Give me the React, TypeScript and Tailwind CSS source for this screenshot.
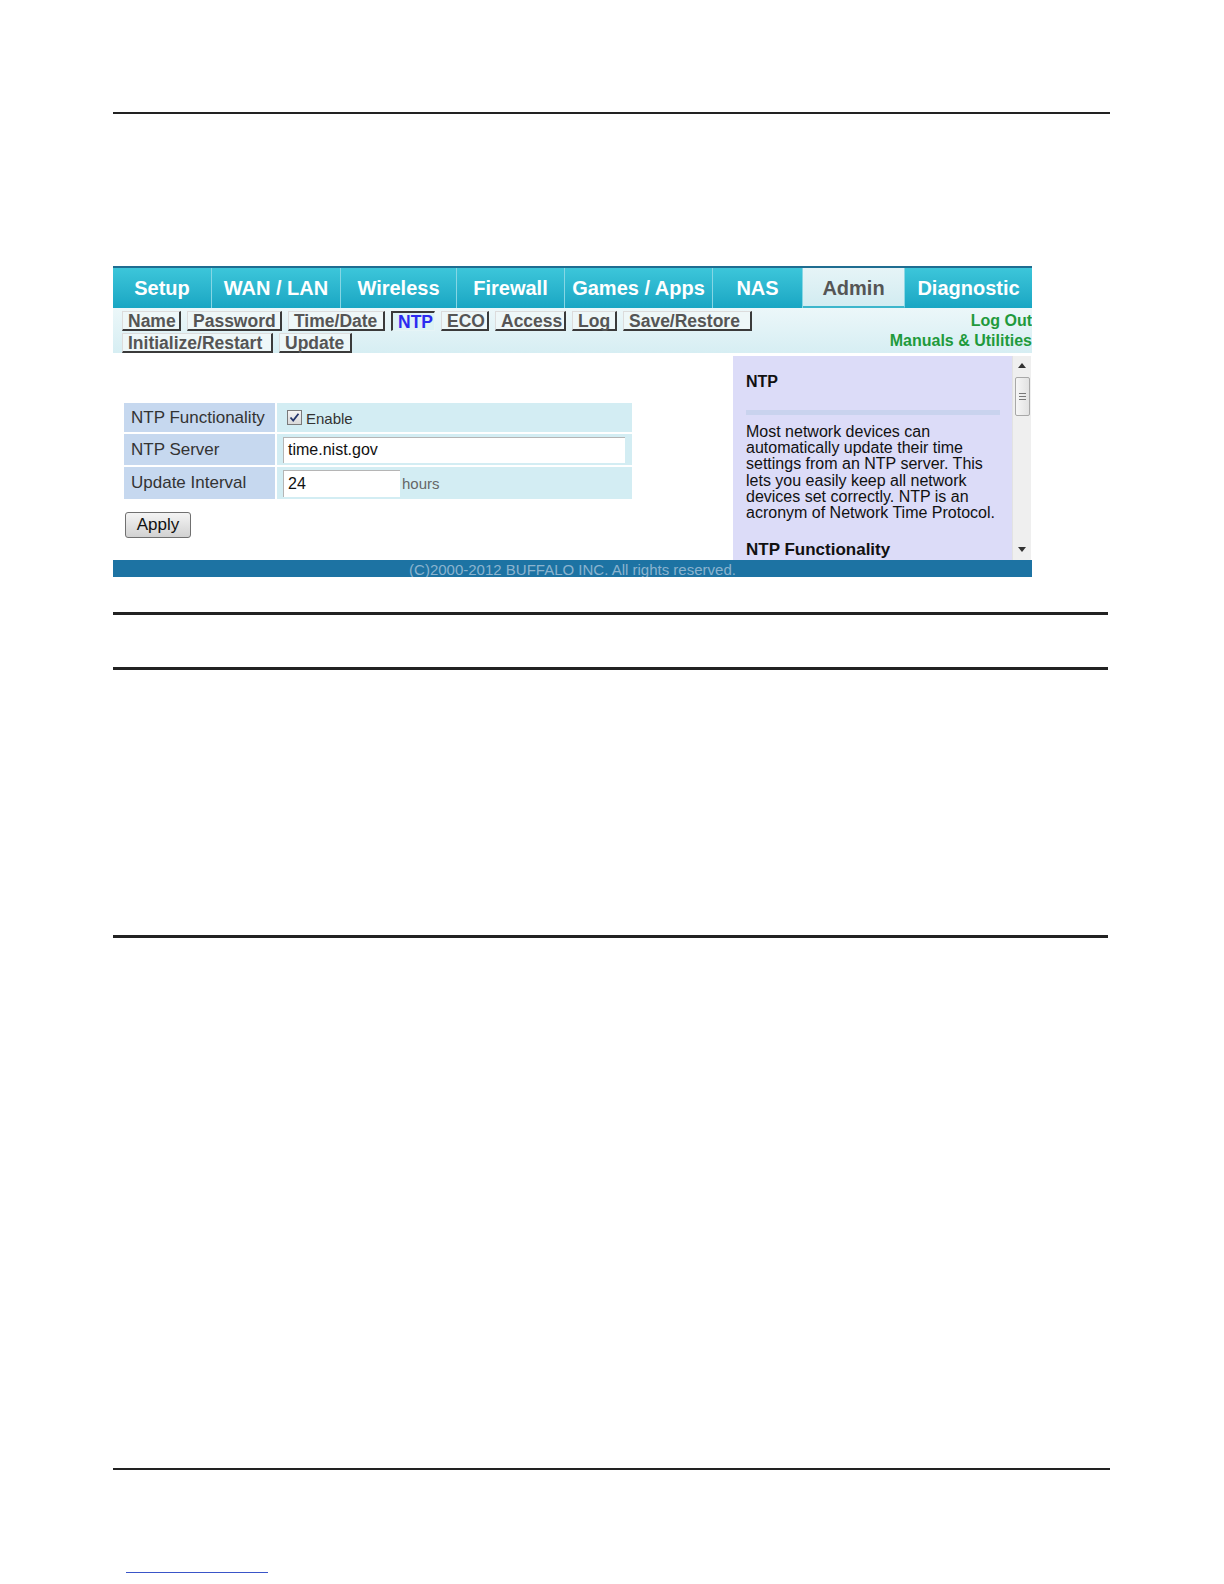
import React from 'react';

const tabs = [
  { label: 'Setup', w: 'w-[99px]' },
  { label: 'WAN / LAN', w: 'w-[129px]' },
  { label: 'Wireless', w: 'w-[116px]' },
  { label: 'Firewall', w: 'w-[108px]' },
  { label: 'Games / Apps', w: 'w-[148px]' },
  { label: 'NAS', w: 'w-[90px]' },
  { label: 'Admin', w: 'w-[102px]', active: true },
  { label: 'Diagnostic', w: 'w-[127px]' },
];

const subRow1 = [
  { label: 'Name', w: 'w-[59px]' },
  { label: 'Password', w: 'w-[95px]' },
  { label: 'Time/Date', w: 'w-[97px]' },
  { label: 'NTP', w: 'w-[44px]' },
  { label: 'ECO', w: 'w-[48px]' },
  { label: 'Access', w: 'w-[71px]' },
  { label: 'Log', w: 'w-[45px]' },
  { label: 'Save/Restore', w: 'w-[129px]' },
];
const subRow2 = [
  { label: 'Initialize/Restart', w: 'w-[151px]' },
  { label: 'Update', w: 'w-[73px]' },
];

function SubTab({ label, w }: { label: string; w: string }) {
  const active = label === 'NTP';
  return (
    <div
      className={
        active
          ? `${w} h-[20px] pl-[5px] flex items-center whitespace-nowrap text-[17.5px] leading-[18px] font-bold text-[#2b2bf0] bg-[#dcf2f5] border-l-2 border-t-2 border-[#3a3a3a] border-r border-b border-r-[#e6f4f6] border-b-[#e6f4f6]`
          : `${w} h-[20px] pl-[5px] flex items-center whitespace-nowrap text-[17.5px] leading-[18px] font-bold text-[#555] bg-[#eef7f8] border-l border-t border-l-[#dcdcdc] border-t-[#dcdcdc] border-r-2 border-b-2 border-r-[#3a3a3a] border-b-[#3a3a3a]`
      }
    >
      {label}
    </div>
  );
}

function TabBar() {
  return (
    <div className="h-[42px] flex border-t-2 border-[#1f6d91]">
      {tabs.map((t) =>
        t.active ? (
          <div
            key={t.label}
            className={`${t.w} h-[40px] flex items-center justify-center bg-gradient-to-b from-[#e6f4f7] to-[#d2ecf1] border-b-2 border-[#3cb6cc] border-r border-r-[#8fd8e5] text-[20px] font-bold text-[#555]`}
          >
            <span className="pt-[2px]">{t.label}</span>
          </div>
        ) : (
          <div
            key={t.label}
            className={`${t.w} h-[40px] flex items-center justify-center bg-gradient-to-b from-[#3cc6da] to-[#18a6c3] border-r border-[#86d6e4] last:border-r-0 text-[20px] font-bold text-white`}
          >
            <span className="pb-[1px]">{t.label}</span>
          </div>
        )
      )}
    </div>
  );
}

function SubNav() {
  return (
    <div className="h-[45px] flex justify-between overflow-hidden bg-gradient-to-b from-[#ecf7f9] to-[#d6eef3]">
      <div className="pl-[9px] pt-[3px] flex flex-col gap-[2px]">
        <div className="flex gap-[6px]">
          {subRow1.map((s) => (
            <SubTab key={s.label} label={s.label} w={s.w} />
          ))}
        </div>
        <div className="flex gap-[6px]">
          {subRow2.map((s) => (
            <SubTab key={s.label} label={s.label} w={s.w} />
          ))}
        </div>
      </div>
      <div className="flex flex-col items-end pt-[3px] text-[16px] leading-[20px] font-bold text-[#1f9a3c]">
        <span>Log Out</span>
        <span>Manuals &amp; Utilities</span>
      </div>
    </div>
  );
}

function CheckBox() {
  return (
    <div className="w-[15px] h-[15px] border border-[#7a7a7a] bg-gradient-to-b from-[#f4f4f4] to-[#d9d9d9] flex items-center justify-center">
      <svg width="11" height="11" viewBox="0 0 11 11">
        <path d="M1.5 5.5 L4.2 8.6 L9.5 1.8" fill="none" stroke="#24356b" strokeWidth="1.8" />
      </svg>
    </div>
  );
}

function Form() {
  return (
    <div className="w-[620px] pl-[11px] pt-[50px]">
      <div className="grid grid-cols-[151px_355px] gap-x-[2px] gap-y-[2px] text-[17px] text-[#333]">
        <div className="h-[29px] bg-[#c6d8ef] pl-[7px] flex items-center">NTP Functionality</div>
        <div className="h-[29px] bg-[#d3edf3] pl-[10px] flex items-center gap-[4px]">
          <CheckBox />
          <span className="text-[15px] text-[#333] pt-[4px]">Enable</span>
        </div>
        <div className="h-[31px] bg-[#c6d8ef] pl-[7px] flex items-center">NTP Server</div>
        <div className="h-[31px] bg-[#d3edf3] pl-[6px] flex items-center">
          <div className="w-[342px] h-[26px] bg-white border-t border-l border-[#b5b5b5] pl-[4px] flex items-center text-[16px] text-[#111]">
            time.nist.gov
          </div>
        </div>
        <div className="h-[32px] bg-[#c6d8ef] pl-[7px] flex items-center">Update Interval</div>
        <div className="h-[32px] bg-[#d3edf3] pl-[6px] flex items-center">
          <div className="w-[117px] h-[27px] bg-white border-t border-l border-[#b5b5b5] pl-[4px] flex items-center text-[16px] text-[#111]">
            24
          </div>
          <span className="text-[15px] text-[#666] pl-[2px] pt-[3px]">hours</span>
        </div>
      </div>
      <button className="mt-[13px] ml-[1px] w-[66px] h-[26px] rounded-[3px] border border-[#707070] bg-gradient-to-b from-[#f4f4f4] to-[#d2d2d2] text-[17px] text-[#111] flex items-center justify-center">
        Apply
      </button>
    </div>
  );
}

function Help() {
  const lines = [
    'Most network devices can',
    'automatically update their time',
    'settings from an NTP server. This',
    'lets you easily keep all network',
    'devices set correctly. NTP is an',
    'acronym of Network Time Protocol.',
  ];
  return (
    <div className="w-[279px] mt-[3px] bg-[#dcdcf8] pl-[13px] pr-[12px] pt-[18px] overflow-hidden text-[#111]">
      <div className="text-[16px] leading-[16px] font-bold">NTP</div>
      <div className="mt-[20px] h-[5px] w-[254px] bg-[#c9d3ee]" />
      <div className="mt-[9px] text-[16px] leading-[16.2px]">
        {lines.map((l) => (
          <div key={l}>{l}</div>
        ))}
      </div>
      <div className="mt-[20px] text-[17px] leading-[17px] font-bold">NTP Functionality</div>
    </div>
  );
}

function ScrollBar() {
  return (
    <div className="w-[19px] mt-[3px] bg-[#efefef] border-l border-[#e2e2e2] flex flex-col items-center">
      <svg className="mt-[7px]" width="8" height="5" viewBox="0 0 8 5">
        <path d="M0 5 L4 0 L8 5 Z" fill="#333" />
      </svg>
      <div className="mt-[9px] w-[15px] h-[39px] rounded-[2px] border border-[#a8a8a8] bg-gradient-to-r from-[#f6f6f6] to-[#e2e2e2] flex flex-col items-center justify-center gap-[2px]">
        <div className="w-[7px] h-[1px] bg-[#777]" />
        <div className="w-[7px] h-[1px] bg-[#777]" />
        <div className="w-[7px] h-[1px] bg-[#777]" />
      </div>
      <div className="flex-1" />
      <svg className="mb-[8px]" width="8" height="5" viewBox="0 0 8 5">
        <path d="M0 0 L4 5 L8 0 Z" fill="#333" />
      </svg>
    </div>
  );
}

function RouterScreen() {
  return (
    <div className="ml-[113px] w-[919px] font-['Liberation_Sans',Arial,sans-serif]">
      <TabBar />
      <SubNav />
      <div className="h-[207px] flex bg-white">
        <Form />
        <Help />
        <ScrollBar />
      </div>
      <div className="h-[17px] bg-[#1d73a3] overflow-hidden text-center text-[15px] leading-[17px] text-[#8bb3cf] pt-[1px]">
        (C)2000-2012 BUFFALO INC. All rights reserved.
      </div>
    </div>
  );
}

export default function App() {
  return (
    <div className="w-[1224px] h-[1584px] bg-white overflow-hidden">
      <div className="h-[112px]" />
      <div className="ml-[113px] w-[997px] h-[2px] bg-[#222]" />
      <div className="h-[152px]" />
      <RouterScreen />
      <div className="ml-[113px] mt-[35px] w-[995px] h-[3px] bg-[#222]" />
      <div className="ml-[113px] mt-[52px] w-[995px] h-[3px] bg-[#222]" />
      <div className="ml-[113px] mt-[265px] w-[995px] h-[3px] bg-[#222]" />
      <div className="ml-[113px] mt-[530px] w-[997px] h-[2px] bg-[#222]" />
      <div className="ml-[126px] mt-[102px] w-[142px] h-[1px] bg-[#3a55c8]" />
    </div>
  );
}
